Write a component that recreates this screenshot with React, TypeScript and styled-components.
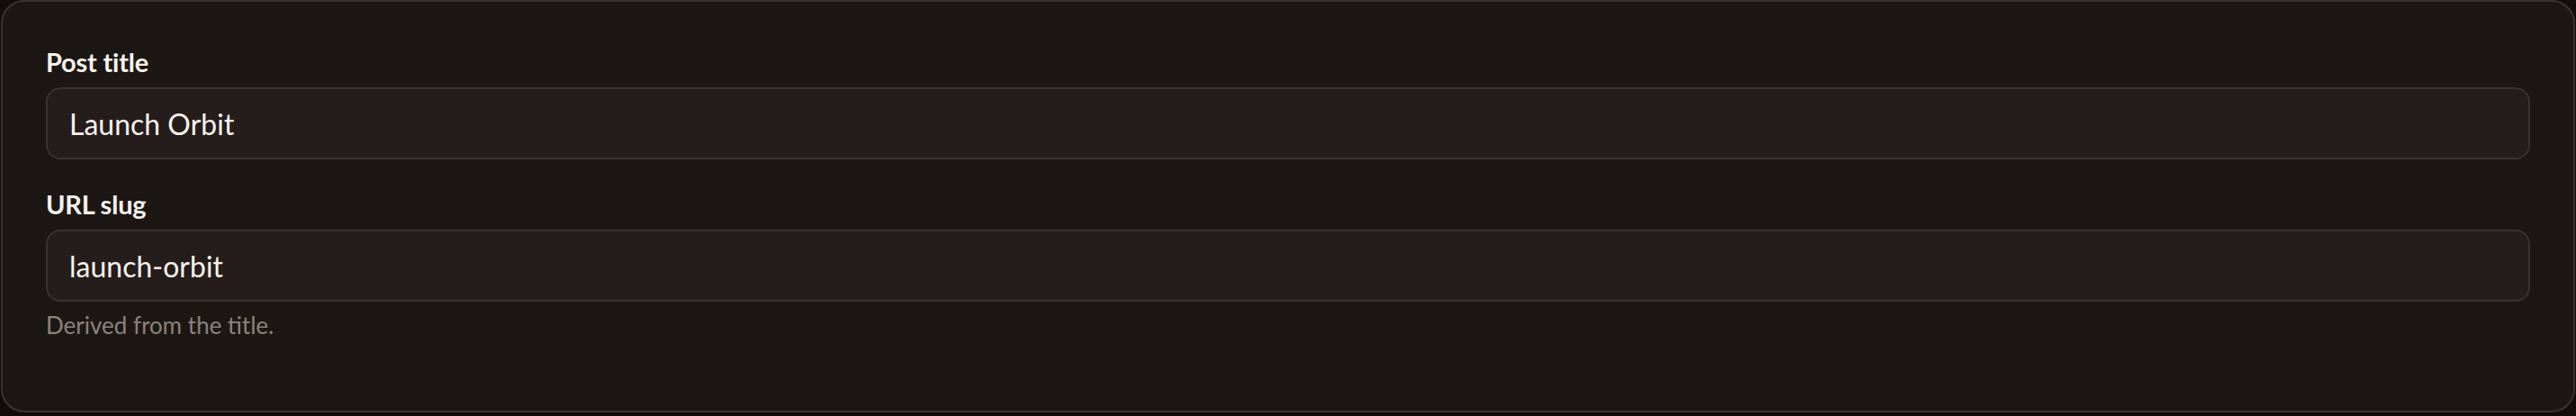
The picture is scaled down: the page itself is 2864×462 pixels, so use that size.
import React from "react";
import styled, { createGlobalStyle } from "styled-components";

const Global = createGlobalStyle`
  html, body {
    margin: 0;
    padding: 0;
    background: #110d0b;
  }
  body {
    font-family: Lato, "Noto Sans", sans-serif;
    -webkit-font-smoothing: antialiased;
  }
  * { box-sizing: border-box; }
`;

const Card = styled.section`
  margin: 0 1px;
  height: 458px;
  background: #1c1714;
  border: 2px solid #3a3230;
  border-radius: 26px;
  padding: 47px 48px 48px 48px;
  display: flex;
  flex-direction: column;
  gap: 30px;
`;

const Field = styled.div`
  display: flex;
  flex-direction: column;
  gap: 8px;
`;

const Label = styled.label`
  font-size: 29px;
  line-height: 40px;
  font-weight: 700;
  color: #f7f2ec;
  letter-spacing: -0.2px;
`;

const Input = styled.input`
  height: 80px;
  width: 100%;
  background: #251d1b;
  border: 2px solid #3a3230;
  border-radius: 16px;
  padding: 0 24px;
  font-family: Lato, "Noto Sans", sans-serif;
  font-size: 32px;
  color: #f7f2ec;
  outline: none;
`;

const Help = styled.p`
  margin: 0;
  font-size: 26px;
  line-height: 36px;
  color: #8d827d;
`;

export default function App() {
  return (
    <>
      <Global />
      <Card>
        <Field>
          <Label htmlFor="title">Post title</Label>
          <Input id="title" defaultValue="Launch Orbit" />
        </Field>
        <Field>
          <Label htmlFor="slug">URL slug</Label>
          <Input id="slug" defaultValue="launch-orbit" />
          <Help>Derived from the title.</Help>
        </Field>
      </Card>
    </>
  );
}
